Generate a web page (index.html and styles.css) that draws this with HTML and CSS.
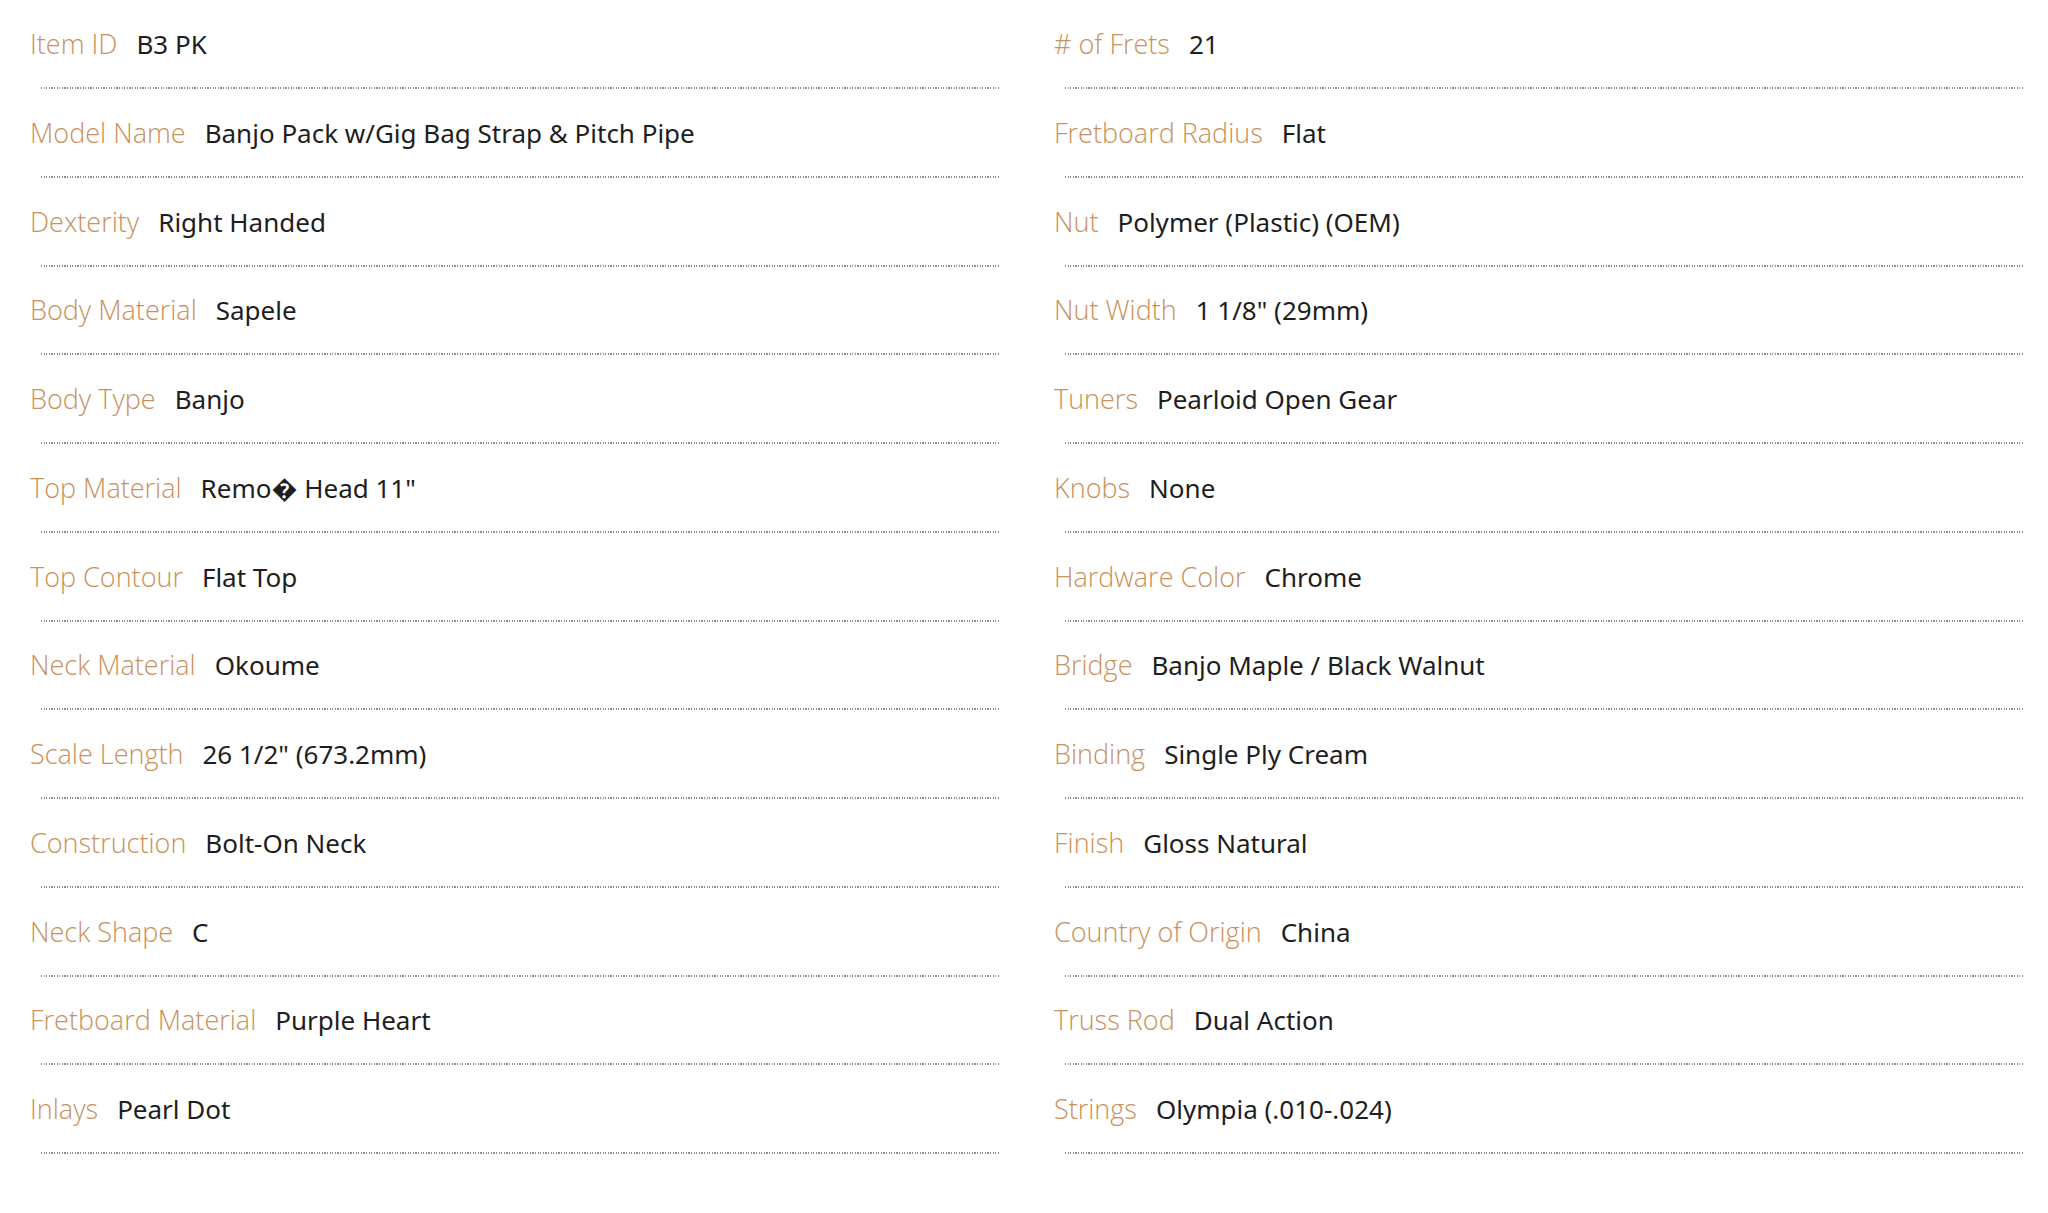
FILE: index.html
```html
<!DOCTYPE html>
<html>
<head>
<meta charset="utf-8">
<link rel="stylesheet" href="styles.css">
</head>
<body>
<div class="specs">
  <ul class="col">
    <li class="row"><span class="k">Item ID</span><span class="v">B3 PK</span></li>
    <li class="row"><span class="k">Model Name</span><span class="v">Banjo Pack w/Gig Bag Strap &amp; Pitch Pipe</span></li>
    <li class="row"><span class="k">Dexterity</span><span class="v">Right Handed</span></li>
    <li class="row"><span class="k">Body Material</span><span class="v">Sapele</span></li>
    <li class="row"><span class="k">Body Type</span><span class="v">Banjo</span></li>
    <li class="row"><span class="k">Top Material</span><span class="v">Remo� Head 11"</span></li>
    <li class="row"><span class="k">Top Contour</span><span class="v">Flat Top</span></li>
    <li class="row"><span class="k">Neck Material</span><span class="v">Okoume</span></li>
    <li class="row"><span class="k">Scale Length</span><span class="v">26 1/2" (673.2mm)</span></li>
    <li class="row"><span class="k">Construction</span><span class="v">Bolt-On Neck</span></li>
    <li class="row"><span class="k">Neck Shape</span><span class="v">C</span></li>
    <li class="row"><span class="k">Fretboard Material</span><span class="v">Purple Heart</span></li>
    <li class="row"><span class="k">Inlays</span><span class="v">Pearl Dot</span></li>
  </ul>
  <ul class="col">
    <li class="row"><span class="k"># of Frets</span><span class="v">21</span></li>
    <li class="row"><span class="k">Fretboard Radius</span><span class="v">Flat</span></li>
    <li class="row"><span class="k">Nut</span><span class="v">Polymer (Plastic) (OEM)</span></li>
    <li class="row"><span class="k">Nut Width</span><span class="v">1 1/8" (29mm)</span></li>
    <li class="row"><span class="k">Tuners</span><span class="v">Pearloid Open Gear</span></li>
    <li class="row"><span class="k">Knobs</span><span class="v">None</span></li>
    <li class="row"><span class="k">Hardware Color</span><span class="v">Chrome</span></li>
    <li class="row"><span class="k">Bridge</span><span class="v">Banjo Maple / Black Walnut</span></li>
    <li class="row"><span class="k">Binding</span><span class="v">Single Ply Cream</span></li>
    <li class="row"><span class="k">Finish</span><span class="v">Gloss Natural</span></li>
    <li class="row"><span class="k">Country of Origin</span><span class="v">China</span></li>
    <li class="row"><span class="k">Truss Rod</span><span class="v">Dual Action</span></li>
    <li class="row"><span class="k">Strings</span><span class="v">Olympia (.010-.024)</span></li>
  </ul>
</div>
</body>
</html>
```
FILE: styles.css
```css
html, body {
  margin: 0;
  padding: 0;
  background: #fff;
}
body {
  font-family: "Noto Sans", "Open Sans", sans-serif;
  font-size: 26px;
}
.specs {
  display: grid;
  grid-template-columns: 959px 959px;
  column-gap: 65px;
  padding-left: 41px;
}
.col {
  list-style: none;
  margin: 0;
  padding: 0;
}
.row {
  height: 88.75px;
  box-sizing: border-box;
  position: relative;
  padding-top: 21px;
  line-height: 46px;
  white-space: nowrap;
}
.row::after {
  content: "";
  display: block;
  height: 2px;
  position: absolute;
  left: 0;
  right: 0;
  top: 87px;
  background-image: repeating-linear-gradient(90deg, #7a7a7a 0 1.3px, transparent 1.3px 2.6px);
  opacity: 0.85;
}
.k {
  margin-left: -11px;
  font-family: "Open Sans", "Noto Sans", sans-serif;
  font-size: 27px;
  color: #c9915b;
  font-weight: 300;
  margin-right: 19px;
}
.v {
  color: #1e1e1e;
  font-weight: 400;
}
```
